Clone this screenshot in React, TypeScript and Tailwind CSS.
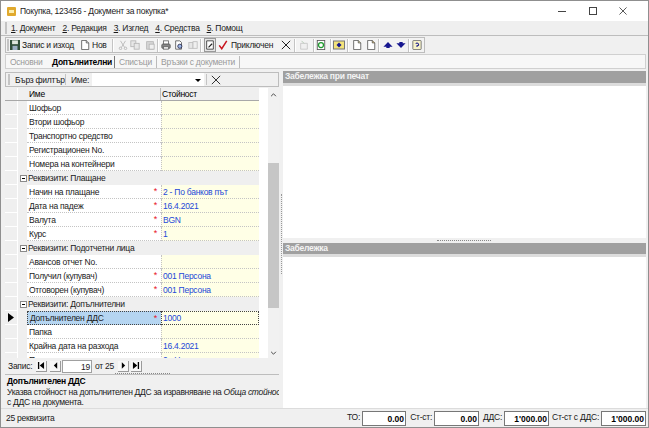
import type { ReactNode } from 'react'

const FONT = { fontFamily: '"Liberation Sans", Arial, sans-serif' }

type Row =
  | { kind: 'group'; label: string }
  | { kind: 'row'; label: string; value?: string; required?: boolean; current?: boolean }

const rows: Row[] = [
  { kind: 'row', label: 'Шофьор' },
  { kind: 'row', label: 'Втори шофьор' },
  { kind: 'row', label: 'Транспортно средство' },
  { kind: 'row', label: 'Регистрационен No.' },
  { kind: 'row', label: 'Номера на контейнери' },
  { kind: 'group', label: 'Реквизити: Плащане' },
  { kind: 'row', label: 'Начин на плащане', value: '2 - По банков път', required: true },
  { kind: 'row', label: 'Дата на падеж', value: '16.4.2021', required: true },
  { kind: 'row', label: 'Валута', value: 'BGN', required: true },
  { kind: 'row', label: 'Курс', value: '1', required: true },
  { kind: 'group', label: 'Реквизити: Подотчетни лица' },
  { kind: 'row', label: 'Авансов отчет No.' },
  { kind: 'row', label: 'Получил (купувач)', value: '001 Персона', required: true },
  { kind: 'row', label: 'Отговорен (купувач)', value: '001 Персона', required: true },
  { kind: 'group', label: 'Реквизити: Допълнителни' },
  { kind: 'row', label: 'Допълнителен ДДС', value: '1000', required: true, current: true },
  { kind: 'row', label: 'Папка' },
  { kind: 'row', label: 'Крайна дата на разхода', value: '16.4.2021' },
  { kind: 'row', label: 'Платежно нареждане', value: '0 - Не' },
]

function Icon({ children, className = '' }: { children: ReactNode; className?: string }) {
  return (
    <svg viewBox="0 0 12 12" className={`h-[10px] w-[10px] shrink-0 ${className}`}>
      {children}
    </svg>
  )
}

function Sep({ className = '' }: { className?: string }) {
  return <div className={`h-[13px] w-[2px] shrink-0 border-l border-r border-l-[#c4c4c4] border-r-white ${className}`} />
}

function DocIcon({ fold = '#f0f0f0', className = '' }: { fold?: string; className?: string }) {
  return (
    <Icon className={className}>
      <path d="M2 .5h5.500L10.500 3.500V11.500H2z" fill="#fff" stroke="#555" />
      <path d="M7.500 .5v3h3" fill={fold} stroke="#555" />
    </Icon>
  )
}

function Toolbar() {
  return (
    <div className="ml-[4px] flex h-[16px] w-[420px] shrink-0 items-center border border-[#bdbdbd] bg-[#f3f3f3]">
      <div className="ml-[1px] h-[12px] w-[2px] bg-[#c4c4c4]" />
      <Icon className="ml-[1px]">
        <rect x="0" y="0" width="12" height="12" fill="#2f4f3a" />
        <rect x="2.500" y="0.500" width="7" height="4.500" fill="#dfe8df" />
        <rect x="3" y="7" width="6" height="5" fill="#9bb0c4" />
      </Icon>
      <span className="ml-[2px] w-[51px] whitespace-nowrap">Запис и изход</span>
      <DocIcon className="ml-[7px]" />
      <span className="ml-[2px] w-[15px] whitespace-nowrap">Нов</span>
      <Sep className="ml-[5px]" />
      <Icon className="ml-[4px] opacity-50">
        <path d="M3 1l5 8M9 1L4 9" stroke="#777" fill="none" />
        <circle cx="3" cy="10" r="1.500" fill="none" stroke="#777" />
        <circle cx="9" cy="10" r="1.500" fill="none" stroke="#777" />
      </Icon>
      <Icon className="ml-[2px] opacity-50">
        <rect x="1" y="1" width="6" height="7" fill="#ddd" stroke="#777" />
        <rect x="5" y="4" width="6" height="7" fill="#ddd" stroke="#777" />
      </Icon>
      <Icon className="ml-[5px] opacity-50">
        <rect x="2" y="2" width="8" height="9" fill="#bbb" stroke="#777" />
        <rect x="5" y="5" width="6" height="6" fill="#eee" stroke="#777" />
      </Icon>
      <Sep className="ml-[2px]" />
      <Icon className="ml-[2px]">
        <rect x="3" y="1" width="6" height="4" fill="#fff" stroke="#666" />
        <rect x="1" y="5" width="10" height="5" rx="1" fill="#888" stroke="#555" />
        <rect x="3" y="8" width="6" height="3" fill="#eee" stroke="#666" />
      </Icon>
      <Icon className="ml-[3px]">
        <path d="M2 1h5l2 2v8H2z" fill="#fff" stroke="#555" />
        <circle cx="7" cy="7.500" r="2.500" fill="#9db8e8" stroke="#224" />
      </Icon>
      <Icon className="ml-[4px] opacity-50">
        <rect x="1" y="3" width="5" height="7" fill="#ddd" stroke="#888" />
        <rect x="6" y="2" width="5" height="8" fill="#eee" stroke="#888" />
      </Icon>
      <Sep className="ml-[2px]" />
      <div className="ml-[2px] flex h-[14px] w-[12px] shrink-0 items-center justify-center border border-[#9a9a9a] bg-[#e6e6e6]">
        <svg viewBox="0 0 12 12" className="h-[10px] w-[10px]">
          <path d="M2 1h8v10H2z" fill="#fff" stroke="#333" />
          <path d="M4 8l4-4 1 1-4 4H4z" fill="#222" />
        </svg>
      </div>
      <Icon className="ml-[2px]">
        <path d="M1.500 6.500L4.500 10.500L10.500 1" fill="none" stroke="#c8141e" strokeWidth="1.800" />
      </Icon>
      <span className="ml-[3px] w-[44px] whitespace-nowrap">Приключен</span>
      <Icon className="ml-[6px]">
        <path d="M1 1l10 10M11 1L1 11" stroke="#222" strokeWidth="1.200" />
      </Icon>
      <Sep className="ml-[3px]" />
      <Icon className="ml-[3px] opacity-50">
        <path d="M2 4h8v7H2z" fill="#eee" stroke="#999" />
        <path d="M3 1l3 3" stroke="#6a9a6a" />
      </Icon>
      <Sep className="ml-[4px]" />
      <Icon className="ml-[1px]">
        <rect x="1.500" y="0.500" width="9" height="11" fill="#fff" stroke="#555" />
        <circle cx="6" cy="6" r="3" fill="none" stroke="#1c9a2c" strokeWidth="1.500" />
      </Icon>
      <Sep className="ml-[4px]" />
      <svg viewBox="0 0 12 12" className="ml-[1px] h-[12px] w-[12px] shrink-0">
        <rect x="0.500" y="2" width="11" height="8" fill="#f3e37a" stroke="#777" />
        <path d="M3.500 6L6 3.500 8.500 6 6 8.500z" fill="#17178f" />
      </svg>
      <Sep className="ml-[2px]" />
      <DocIcon fold="#e8e0a0" className="ml-[3px]" />
      <DocIcon fold="#e8c878" className="ml-[4px]" />
      <Sep className="ml-[2px]" />
      <Icon className="ml-[3px]">
        <path d="M6 2.500L11.500 8H8v1.500H4V8H.5z" fill="#17178f" />
      </Icon>
      <Icon className="ml-[3px]">
        <path d="M6 9.500L11.500 4H8V2.500H4V4H.5z" fill="#17178f" />
      </Icon>
      <Sep className="ml-[2px]" />
      <Icon className="ml-[2px]">
        <rect x="1" y="0.500" width="10" height="11" rx="1" fill="#f6f2c8" stroke="#666" />
        <path d="M4.500 4.500Q6 2.500 7.500 4.500T6 7v1.500" fill="none" stroke="#22228f" strokeWidth="1.300" />
      </Icon>
    </div>
  )
}

function Grid() {
  return (
    <div className="flex min-h-0 flex-1 overflow-hidden">
      <div className="w-[254px] shrink-0">
        <div className="flex h-[13px] border-b border-[#a8a8a8] bg-[#efefef] text-black">
          <div className="w-[13px] border-r border-white" />
          <div className="w-[9px]" />
          <div className="w-[134px] border-r border-[#bcbcbc] pl-[2px] leading-[12px]">Име</div>
          <div className="flex-1 pl-[1px] leading-[12px]">Стойност</div>
        </div>
        {rows.map((row) => (row.kind === 'group' ? <GroupRow key={row.label} label={row.label} /> : <DataRow key={row.label} row={row} />))}
      </div>
      <div className="w-[9px] shrink-0 bg-white" />
      <div className="flex w-[11px] shrink-0 flex-col items-center bg-[#f1f1f1]">
        <svg viewBox="0 0 8 5" className="mt-[5px] h-[4px] w-[7px] shrink-0">
          <path d="M1 4l3-3 3 3" fill="none" stroke="#444" strokeWidth="1.200" />
        </svg>
        <div className="mt-[66px] h-[145px] w-full shrink-0 bg-[#c6c6c6]" />
        <div className="flex-1" />
        <svg viewBox="0 0 8 5" className="mb-[3px] h-[4px] w-[7px] shrink-0">
          <path d="M1 1l3 3 3-3" fill="none" stroke="#444" strokeWidth="1.200" />
        </svg>
      </div>
    </div>
  )
}

function Indicator({ current }: { current?: boolean }) {
  return (
    <div className="flex w-[13px] shrink-0 items-center justify-center border-b border-r border-white bg-[#efefef]">
      {current && (
        <svg viewBox="0 0 6 9" className="h-[9px] w-[6px]">
          <path d="M0 0l6 4.500L0 9z" fill="#000" />
        </svg>
      )}
    </div>
  )
}

function GroupRow({ label }: { label: string }) {
  return (
    <div className="flex h-[14px]">
      <Indicator />
      <div className="flex flex-1 items-center bg-[#efefef] pl-[2px]">
        <div className="relative mr-[1px] h-[7px] w-[7px] border border-[#8a8a8a] bg-white">
          <div className="absolute left-[1px] top-[2px] h-[1px] w-[3px] bg-black" />
        </div>
        <span className="whitespace-nowrap">{label}</span>
      </div>
    </div>
  )
}

function DataRow({ row }: { row: Extract<Row, { kind: 'row' }> }) {
  return (
    <div className="flex h-[14px]">
      <Indicator current={row.current} />
      <div className="w-[9px] shrink-0 bg-[#efefef]" />
      <div
        className={`flex w-[134px] shrink-0 items-center justify-between border-b border-dotted pl-[2px] pr-[4px] ${row.current ? 'border-l border-t border-[#444] bg-[#b5d5f1]' : 'border-[#c4c4c4] bg-white'}`}
      >
        <span className="whitespace-nowrap">{row.label}</span>
        {row.required && <span className="text-[9px] leading-[9px] text-[#e81123]">*</span>}
      </div>
      <div
        className={`flex min-w-0 flex-1 items-center whitespace-nowrap border-b border-l border-dotted bg-[#ffffe6] pl-[1px] text-[#2448d8] ${row.current ? 'border-r border-t border-[#444]' : 'border-[#c4c4c4]'}`}
      >
        {row.value}
      </div>
    </div>
  )
}

function Nav({ children, className = '' }: { children: ReactNode; className?: string }) {
  return (
    <div className={`flex h-[11px] w-[11px] shrink-0 items-center justify-center border-b border-r border-[#9a9a9a] bg-[#f7f7f7] ${className}`}>
      {children}
    </div>
  )
}

function Total({ label, value, width, labelWidth }: { label: string; value: string; width: string; labelWidth: string }) {
  return (
    <div className="flex items-center">
      <span className={`${labelWidth} mb-[3px] whitespace-nowrap pr-[2px] text-right`}>{label}</span>
      <div className={`${width} h-[15px] border border-[#777] bg-white pr-[1px] text-right font-bold leading-[14px] tracking-normal text-black`}>{value}</div>
    </div>
  )
}

export default function App() {
  return (
    <div
      style={FONT}
      className="flex h-[428px] w-[649px] flex-col overflow-hidden border border-[#8f8f8f] bg-[#f0f0f0] text-[8.500px] leading-[12px] tracking-[-0.25px] text-[#1a1a1a]"
    >
      {/* title bar */}
      <div className="flex h-[20px] shrink-0 items-center bg-white pl-[6px]">
        <div className="flex h-[9px] w-[9px] items-center justify-center rounded-[1px] bg-[#e0a92e]">
          <div className="h-[3px] w-[5px] bg-[#fbeeb0]" />
        </div>
        <span className="ml-[4px] w-[408px] whitespace-nowrap text-[#222]">Покупка, 123456 - Документ за покупка*</span>
        <div className="ml-[130px] h-[1px] w-[8px] shrink-0 bg-[#444]" />
        <div className="ml-[23px] h-[8px] w-[8px] shrink-0 border border-[#444]" />
        <svg viewBox="0 0 9 9" className="ml-[22px] h-[8px] w-[8px] shrink-0">
          <path d="M.5.5l8 8M8.500.5l-8 8" stroke="#444" />
        </svg>
      </div>

      {/* menu */}
      <div className="flex h-[15px] shrink-0 items-center border-b border-[#bdbdbd] bg-[#efefef] pl-[4px]">
        <div className="mr-[4px] h-[12px] w-[2px] bg-[#c4c4c4]" />
        {['Документ', 'Редакция', 'Изглед', 'Средства', 'Помощ'].map((item, i) => (
          <span key={item} className="mr-[7px] whitespace-nowrap">
            <span className="underline">{i + 1}</span>. {item}
          </span>
        ))}
      </div>

      <div className="mt-[1px] flex shrink-0">
        <Toolbar />
      </div>

      {/* tabs */}
      <div className="ml-[4px] mr-[2px] mt-[1px] flex h-[15px] shrink-0 items-center border border-[#d0d0d0] bg-[#f7f7f7]">
        <span className="ml-[4px] w-[33px] whitespace-nowrap text-[#9a9a9a]">Основни</span>
        <span className="ml-[9px] w-[58px] whitespace-nowrap font-bold text-black">Допълнителни</span>
        <div className="ml-[4px] h-[12px] w-[1px] bg-[#777]" />
        <span className="ml-[4px] w-[33px] whitespace-nowrap text-[#9a9a9a]">Списъци</span>
        <div className="ml-[4px] h-[12px] w-[1px] bg-[#bbb]" />
        <span className="ml-[4px] w-[74px] whitespace-nowrap text-[#9a9a9a]">Връзки с документи</span>
        <div className="ml-[4px] h-[12px] w-[1px] bg-[#bbb]" />
      </div>

      {/* body */}
      <div className="flex min-h-0 flex-1">
        <div className="flex w-[278px] shrink-0 flex-col pl-[4px]">
          <div className="mt-[3px] flex h-[15px] shrink-0 items-center border border-[#bdbdbd]">
            <div className="ml-[2px] h-[11px] w-[2px] bg-[#c4c4c4]" />
            <span className="ml-[5px] w-[47px] whitespace-nowrap">Бърз филтър</span>
            <div className="ml-[3px] h-[11px] w-[1px] bg-[#c4c4c4]" />
            <span className="ml-[5px] w-[17px] whitespace-nowrap">Име:</span>
            <div className="relative ml-[4px] h-[13px] w-[112px] bg-white">
              <div className="absolute right-[3px] top-[6px] h-0 w-0 border-x-[3px] border-t-[3px] border-x-transparent border-t-black" />
            </div>
            <div className="ml-[2px] h-[11px] w-[1px] bg-[#c4c4c4]" />
            <Icon className="ml-[4px]">
              <path d="M1 1l10 10M11 1L1 11" stroke="#222" strokeWidth="1.100" />
            </Icon>
          </div>
          <div className="flex min-h-0 flex-1 pt-[1px]">
            <Grid />
          </div>
          <div className="flex h-[15px] shrink-0 items-center pt-[1px]">
            <span className="ml-[3px] w-[24px] whitespace-nowrap">Запис:</span>
            <Nav className="ml-[4px]">
              <svg viewBox="0 0 9 8" className="h-[7px] w-[8px]"><path d="M1 0h1.500v8H1zM8 0v8L3 4z" fill="#000" /></svg>
            </Nav>
            <Nav className="ml-[3px]">
              <svg viewBox="0 0 6 8" className="h-[7px] w-[5px]"><path d="M5 0v8L1 4z" fill="#000" /></svg>
            </Nav>
            <div className="ml-[1px] h-[13px] w-[30px] shrink-0 border border-[#a0a0a0] bg-white pr-[1px] text-right leading-[12px]">19</div>
            <span className="ml-[3px] w-[20px] whitespace-nowrap">от 25</span>
            <Nav className="ml-[3px]">
              <svg viewBox="0 0 6 8" className="h-[7px] w-[5px]"><path d="M1 0v8l4-4z" fill="#000" /></svg>
            </Nav>
            <Nav className="ml-[2px]">
              <svg viewBox="0 0 9 8" className="h-[7px] w-[8px]"><path d="M8 0H6.500v8H8zM1 0v8l5-4z" fill="#000" /></svg>
            </Nav>
          </div>
          <div className="flex h-[2px] shrink-0 items-start justify-center border-b border-[#bdbdbd]">
            <div className="h-[1px] w-[55px] border-t border-dotted border-[#888]" />
          </div>
          <div className="h-[33px] shrink-0 overflow-hidden whitespace-nowrap pl-[2px] pt-[1px] leading-[10.500px] tracking-[-0.3px]">
            <div className="font-bold text-black">Допълнителен ДДС</div>
            <div>
              Указва стойност на допълнителен ДДС за изравняване на <span className="italic">Обща стойност</span>
            </div>
            <div>с ДДС на документа.</div>
          </div>
        </div>

        <div className="flex w-[4px] shrink-0 flex-col items-center justify-center">
          <div className="mt-[-10px] h-[80px] w-[1px] border-l border-dotted border-[#999]" />
        </div>

        <div className="flex min-w-0 flex-1 flex-col pr-[2px]">
          <div className="mt-[2px] h-[12px] shrink-0 bg-[#a0a0a0] pl-[2px] font-bold leading-[11px] text-[#f4f4f4]">Забележка при печат</div>
          <div className="h-[3px] shrink-0 bg-[#dcdcdc]" />
          <div className="h-[152px] shrink-0 bg-white" />
          <div className="flex h-[5px] shrink-0 items-center pl-[154px]">
            <div className="h-[1px] w-[54px] border-t border-dotted border-[#888]" />
          </div>
          <div className="h-[11px] shrink-0 bg-[#a0a0a0] pl-[2px] font-bold leading-[11px] text-[#f4f4f4]">Забележка</div>
          <div className="h-[3px] shrink-0 bg-[#dcdcdc]" />
          <div className="flex-1 bg-white" />
        </div>
      </div>

      {/* status bar */}
      <div className="flex h-[19px] shrink-0 items-center border-t border-[#dcdcdc] pl-[5px] pr-[2px]">
        <span className="flex-1 whitespace-nowrap">25 реквизита</span>
        <Total label="ТО:" labelWidth="w-[16px]" value="0.00" width="w-[44px]" />
        <Total label="Ст-ст:" labelWidth="w-[28px]" value="0.00" width="w-[45px]" />
        <Total label="ДДС:" labelWidth="w-[25px]" value="1'000.00" width="w-[45px]" />
        <Total label="Ст-ст с ДДС:" labelWidth="w-[52px]" value="1'000.00" width="w-[45px]" />
      </div>
    </div>
  )
}
